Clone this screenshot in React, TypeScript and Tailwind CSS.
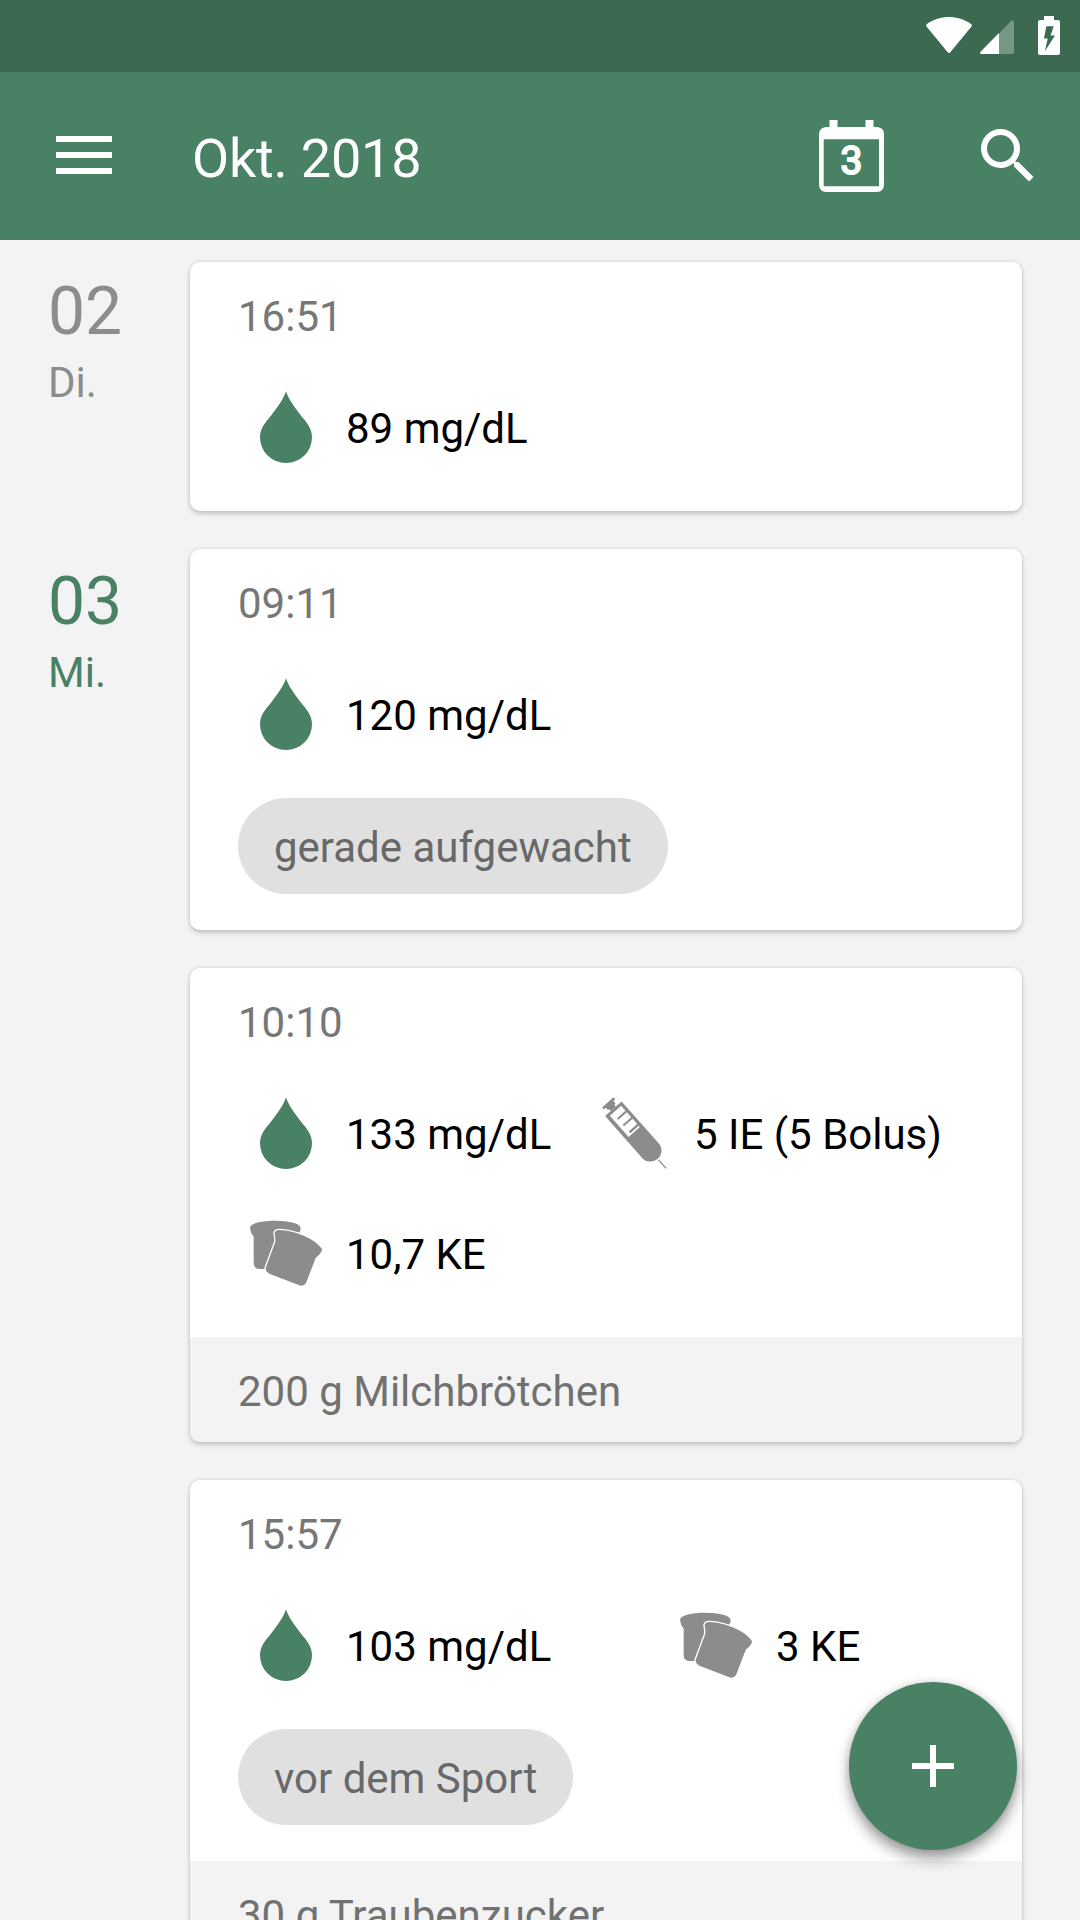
import type { ReactNode } from 'react';

function Drop() {
  return (
    <svg className="size-18 fill-[#488164]" viewBox="0 0 72 72">
      <path d="M36 .3C33.500 8 28 15.500 21.500 24C15 32 10 37.500 10 46.300A26 25.700 0 0 0 62 46.300C62 37.500 57 32 50.500 24C44 15.500 38.500 8 36 .3Z" />
    </svg>
  );
}

function Bread() {
  return (
    <svg className="size-18 fill-[#8c8c8c]" viewBox="210 80 216 216">
      <path d="M221 218V139Q211 127 210 112C212 98 246 91 286 91C328 91 362 100 362 113Q362 122 357 128L300 150L262 236H240Q221 236 221 218Z" />
      <path
        d="M284 132Q283 119 298 119C345 121 405 145 425 175Q430 184 407 203L379 276Q373 289 358 285L268 250Q254 243 258 230L285 157Q288 150 284 132Z"
        stroke="#fff"
        strokeWidth="8"
        paintOrder="stroke"
      />
    </svg>
  );
}

function Syringe() {
  return (
    <svg className="size-18 fill-[#8c8c8c]" viewBox="54 81 216 216">
      <g transform="translate(100 116) rotate(48.500)">
        <path d="M-25 -23H-17V-15H-7V-10H0V10H-7V15H-17V23H-25Z" />
        <path
          fillRule="evenodd"
          d="M0 -33H168A33 33 0 0 1 168 33H0ZM9 -23V22H94V-23H89V11H82V-23H61V11H55V-23H35V11H29V-23Z"
        />
        <path d="M205 -2H239V2H205Z" />
      </g>
    </svg>
  );
}

function StatusBar() {
  return (
    <div className="flex h-[72px] shrink-0 items-start justify-end bg-[#3b6a51] pr-5">
      <svg className="mt-[17px] h-9 w-[46px] fill-white" viewBox="0 0 46 36">
        <path d="M.5 9.500Q-.6 8 1 7C14 -2.300 32 -2.300 45 7Q46.600 8 45.500 9.500L24.500 35Q23 36.800 21.500 35Z" />
      </svg>
      <svg className="mt-5 ml-2 h-[34px] w-[34px] fill-white" viewBox="0 0 34 34">
        <path opacity=".3" d="M19 13.500L31 1Q34 -1 34 2V32Q34 34 32 34H19Z" />
        <path d="M19 13V34H1.500Q-.8 34 .5 31.700Z" />
      </svg>
      <svg className="mt-4 ml-6 h-[39px] w-[22px] fill-white" viewBox="0 0 22 39">
        <path
          fillRule="evenodd"
          d="M6 0H16V4H20Q22 4 22 6V37Q22 39 20 39H2Q0 39 0 37V6Q0 4 2 4H6ZM8.300 10.300L6 22.500H9.700L7 35L17 19.500H12.500L15.700 10.300Z"
        />
      </svg>
    </div>
  );
}

function AppBar() {
  return (
    <header className="flex h-[168px] shrink-0 items-start bg-[#488164] pl-14 text-white">
      <div className="mt-16 flex h-[38px] w-14 flex-col justify-between">
        <span className="h-1.5 bg-white" />
        <span className="h-1.5 bg-white" />
        <span className="h-1.5 bg-white" />
      </div>
      <h1 className="mt-[55px] ml-20 flex-1 text-[54px] leading-[64px] tracking-[-0.2px]">Okt. 2018</h1>
      <div className="relative mt-12 h-[72px] w-[65px]">
        <svg className="h-[72px] w-[65px] fill-white" viewBox="0 0 65 72">
          <path
            fillRule="evenodd"
            d="M10.500 0H18.500V7H46.500V0H54.500V7H58Q65 7.500 65 14V65Q64.500 71.500 58 72H7Q.5 71.500 0 65V14Q.5 7.500 7 7H10.500ZM4.700 19.300V66.300H60V19.300Z"
          />
        </svg>
        <span className="absolute inset-x-0 top-[17px] text-center text-[39px] leading-[48px] [-webkit-text-stroke:2px_white]">
          3
        </span>
      </div>
      <svg className="mt-12 mr-9 ml-[88px] size-18 fill-white" viewBox="0 0 24 24">
        <path d="M15.500 14h-.79l-.28-.27A6.471 6.471 0 0 0 16 9.500 6.500 6.500 0 1 0 9.500 16c1.610 0 3.090-.59 4.230-1.570l.27.28v.79l5 4.990L20.490 19l-4.990-5zm-6 0C7.010 14 5 11.990 5 9.500S7.010 5 9.500 5 14 7.010 14 9.500 11.990 14 9.500 14z" />
      </svg>
    </header>
  );
}

function Value({ icon, text, className = '' }: { icon: ReactNode; text: string; className?: string }) {
  return (
    <div className={`flex h-[120px] items-center ${className}`}>
      <div className="flex w-24 shrink-0 justify-center">{icon}</div>
      <span className="ml-3 pt-0.5 whitespace-nowrap text-black">{text}</span>
    </div>
  );
}

function Card({ time, tag, note, children }: { time: string; tag?: string; note?: string; children: ReactNode }) {
  return (
    <article className="w-[832px] overflow-hidden rounded-[10px] bg-white shadow-[0_3px_5px_rgba(0,0,0,0.16),0_0_4px_rgba(0,0,0,0.12)]">
      <div className="px-12 pt-[30px]">
        <div className="h-[75px] leading-[50px] text-[#777]">{time}</div>
        <div className="flex flex-wrap">{children}</div>
        <div className="h-6" />
        {tag && (
          <div className="mb-9 flex h-24 w-fit items-center rounded-full bg-[#e0e0e0] px-9 pt-[3px] text-[#686868]">
            {tag}
          </div>
        )}
      </div>
      {note && <div className="h-[105px] bg-[#f3f3f3] px-12 pt-[30px] leading-[50px] text-[#717171]">{note}</div>}
    </article>
  );
}

function Day({ day, name, className, children }: { day: string; name: string; className: string; children: ReactNode }) {
  return (
    <section className="flex">
      <div className={`w-[190px] shrink-0 pl-12 ${className}`}>
        <div className="text-[66px] leading-[78px]">{day}</div>
        <div className="mt-[7px] leading-[50px]">{name}</div>
      </div>
      <div className="flex flex-col gap-[38px]">{children}</div>
    </section>
  );
}

export default function App() {
  return (
    <div className="relative flex h-[1920px] w-[1080px] flex-col overflow-hidden bg-[#f3f3f3] font-['Roboto',sans-serif] text-[42px]">
      <StatusBar />
      <AppBar />
      <main className="flex min-h-0 flex-1 flex-col gap-[38px] overflow-hidden pt-[22px]">
        <Day day="02" name="Di." className="pt-[11px] text-[#8c8c8c]">
          <Card time="16:51">
            <Value icon={<Drop />} text="89 mg/dL" />
          </Card>
        </Day>
        <Day day="03" name="Mi." className="pt-[14px] text-[#488164]">
          <Card time="09:11" tag="gerade aufgewacht">
            <Value icon={<Drop />} text="120 mg/dL" />
          </Card>
          <Card time="10:10" note="200 g Milchbrötchen">
            <Value icon={<Drop />} text="133 mg/dL" className="w-[348px]" />
            <Value icon={<Syringe />} text="5 IE (5 Bolus)" />
            <Value icon={<Bread />} text="10,7 KE" className="w-full" />
          </Card>
          <Card time="15:57" tag="vor dem Sport" note="30 g Traubenzucker">
            <Value icon={<Drop />} text="103 mg/dL" className="w-[430px]" />
            <Value icon={<Bread />} text="3 KE" />
          </Card>
        </Day>
      </main>
      <button className="absolute right-[63px] bottom-[70px] flex size-42 items-center justify-center rounded-full bg-[#488164] shadow-[0_9px_14px_rgba(0,0,0,0.36),0_0_8px_rgba(0,0,0,0.15)]">
        <svg className="size-[42px] fill-white" viewBox="0 0 42 42">
          <path d="M18 0H24V18H42V24H24V42H18V24H0V18H18Z" />
        </svg>
      </button>
    </div>
  );
}
